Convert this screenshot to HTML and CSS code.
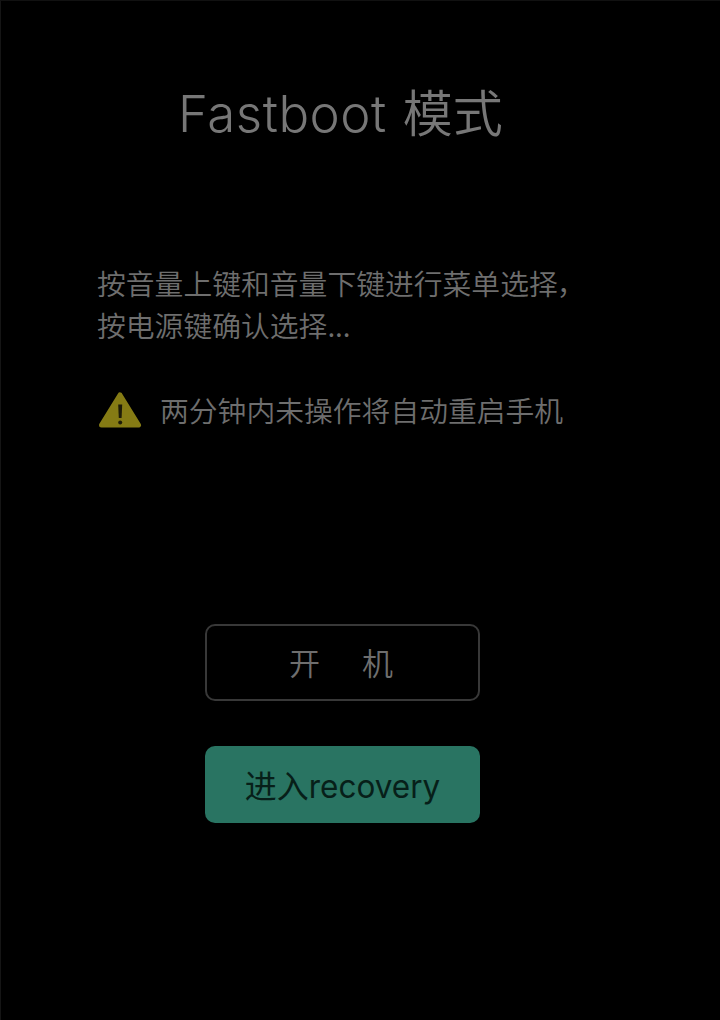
FILE: index.html
```html
<!DOCTYPE html>
<html lang="zh-CN">
<head>
<meta charset="utf-8">
<title>Fastboot 模式</title>
<link rel="stylesheet" href="styles.css">
</head>
<body>
<main class="screen">
  <h1 class="title"><span class="title-latin">Fastboot</span><span>模式</span></h1>
  <p class="hint">按音量上键和音量下键进行菜单选择<span class="comma">，</span><br>按电源键确认选择...</p>
  <div class="warning">
    <svg class="warning-icon" viewBox="0 0 44 38" aria-hidden="true">
      <path d="M22 4 L40.500 34 H3.500 Z" fill="#857b14" stroke="#857b14" stroke-width="5" stroke-linejoin="round"/>
      <path d="M20.200 13.500h4l-.6 13.500h-2.800z" fill="#1d1b08"/>
      <circle cx="22.200" cy="31.500" r="2" fill="#1d1b08"/>
    </svg>
    <span class="warning-text">两分钟内未操作将自动重启手机</span>
  </div>
  <div class="actions">
    <button class="button button-outline"><span>开</span><span>机</span></button>
    <button class="button button-primary"><span>进入</span><span class="button-latin">recovery</span></button>
  </div>
</main>
</body>
</html>
```
FILE: styles.css
```css
* { box-sizing: border-box; }
body { margin: 0; background: #000; }
.screen {
  width: 720px;
  height: 1020px;
  padding-top: 73px;
  border-left: 1px solid #151515;
  border-top: 1px solid #111;
  background: #000;
  color: #6e6e6e;
  font-family: "Noto Sans CJK SC", sans-serif;
  overflow: hidden;
}
.title {
  display: flex;
  align-items: baseline;
  gap: 16px;
  height: 72px;
  margin: 0 0 0 177px;
  color: #777;
  font-size: 50px;
  line-height: 72px;
  font-weight: 350;
  white-space: nowrap;
}
.title-latin {
  font-family: Inter, sans-serif;
  font-size: 51px;
  font-weight: 300;
  letter-spacing: 0.5px;
}
.hint {
  margin: 116px 0 0 96px;
  font-size: 28.8px;
  line-height: 42px;
  font-weight: 350;
  white-space: nowrap;
}
.warning {
  display: flex;
  align-items: center;
  gap: 18px;
  margin: 42px 0 0 97px;
  height: 44px;
}
.warning-icon { width: 44px; height: 38px; }
.warning-text { font-size: 28.8px; line-height: 42px; font-weight: 350; white-space: nowrap; }
.actions {
  display: flex;
  flex-direction: column;
  gap: 45px;
  width: 275px;
  margin: 192px 0 0 204px;
}
.comma { margin-left: -1px; }
.button {
  display: flex;
  align-items: center;
  justify-content: center;
  height: 77px;
  padding: 0;
  border-radius: 10px;
  font: 350 31px "Noto Sans CJK SC", sans-serif;
}
.button-outline { gap: 42px; padding: 0 3px 2px 0; border: 2px solid #383838; background: #000; color: #6e6e6e; }
.button-primary {
  align-items: baseline;
  border: 0;
  background: #297462;
  color: #071f19;
  font-size: 32px;
  line-height: 76px;
  font-weight: 400;
}
.button-latin { font-family: Inter, sans-serif; font-size: 31.500px; }
```
